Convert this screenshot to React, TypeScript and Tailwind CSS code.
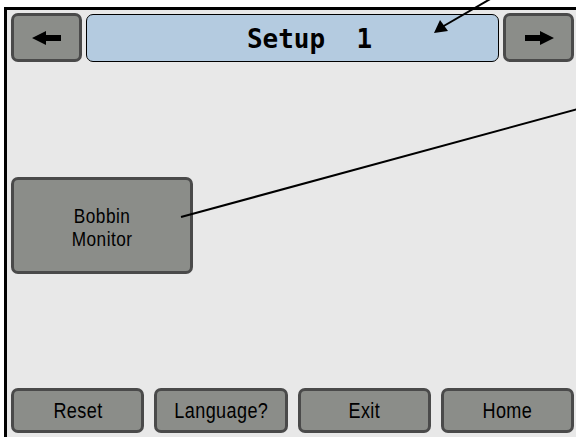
import React from "react";

const btn =
  "rounded-[7px] border-[3px] border-[#4a4a4a] bg-[#8b8d89] flex items-center justify-center text-black";
const txt = { fontFamily: '"Liberation Sans", Arial, sans-serif' };

function LeftArrow() {
  return (
    <svg width="30" height="14" viewBox="0 0 30 14">
      <polygon points="0,7 14,0 14,4 29,4 29,10 14,10 14,14" fill="#000" />
    </svg>
  );
}
function RightArrow() {
  return (
    <svg width="30" height="14" viewBox="0 0 30 14">
      <polygon points="30,7 16,0 16,4 1,4 1,10 16,10 16,14" fill="#000" />
    </svg>
  );
}

export default function App() {
  return (
    <div className="relative w-[576px] h-[437px] bg-white pl-[4px] pt-[7px] overflow-hidden">
      <div className="h-full border-l-[3px] border-t-[3px] border-black bg-[#e8e8e8] flex flex-col pl-[4px] pr-[2px] pt-[3px] pb-[4px]">
        <div className="flex h-[49px] gap-[4px]">
          <div className={`${btn} w-[71px] h-full`}>
            <LeftArrow />
          </div>
          <div className="flex-1 mt-[1px] rounded-[7px] border-[1.5px] border-black bg-[#b4cbe0] flex items-center justify-center pl-[34px] pt-[2px]">
            <span
              className="whitespace-pre text-[26px] font-bold text-black leading-none"
              style={{ fontFamily: '"DejaVu Sans Mono", monospace' }}
            >
              {"Setup  1"}
            </span>
          </div>
          <div className={`${btn} w-[71px] h-full`}>
            <RightArrow />
          </div>
        </div>
        <div className="flex-1 flex items-center">
          <div className={`${btn} w-[182px] h-[97px] pt-[3px]`}>
            <div className="flex flex-col items-center scale-x-[0.82] text-[21px] leading-[23px] tracking-[0.6px]" style={txt}>
              <div>Bobbin</div>
              <div>Monitor</div>
            </div>
          </div>
        </div>
        <div className="grid grid-cols-4 gap-[10px] h-[45px]">
          {["Reset", "Language?", "Exit", "Home"].map((l) => (
            <div key={l} className={btn}>
              <span className="inline-block scale-x-[0.82] text-[22px] leading-none tracking-[0.5px] whitespace-nowrap" style={txt}>
                {l}
              </span>
            </div>
          ))}
        </div>
      </div>
      <svg className="absolute inset-0 pointer-events-none" width="576" height="437" viewBox="0 0 576 437">
        <line x1="181" y1="217" x2="578" y2="109" stroke="#000" strokeWidth="2" />
        <line x1="492" y1="-2" x2="442" y2="27" stroke="#000" strokeWidth="2" />
        <polygon points="434,33 440,20 448,31" fill="#000" />
      </svg>
    </div>
  );
}
